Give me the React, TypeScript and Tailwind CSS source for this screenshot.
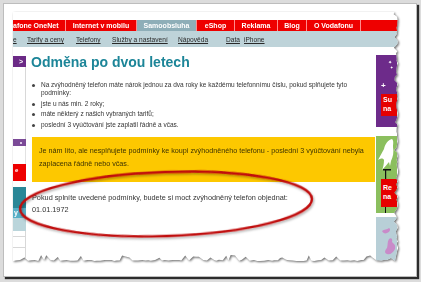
import React from "react";

function rng(seed: number) {
  let s = seed;
  return () => {
    s = (s * 16807) % 2147483647;
    return (s - 1) / 2147483646;
  };
}

function tornClip(W: number, H: number) {
  const r = rng(11);
  const pts: string[] = ["0px 0px"];
  let y = 0;
  while (y < H - 10) {
    const deep = r() < 0.12;
    const x = deep ? W - 4 - r() * 1.5 : W - 1 - r() * 2;
    pts.push(`${x.toFixed(1)}px ${y.toFixed(1)}px`);
    y += 1.5 + r() * 2.5;
  }
  let x = W - 4;
  while (x > 0) {
    const spike = r() < 0.25;
    const yy = spike ? H - 6 - r() * 3 : H - 3 - r() * 1.2;
    pts.push(`${x.toFixed(1)}px ${yy.toFixed(1)}px`);
    x -= 2 + r() * 2.5;
  }
  pts.push(`0px ${H - 3}px`);
  return `polygon(${pts.join(",")})`;
}

const clip = tornClip(386, 252);

export default function App() {
  return (
    <div className="relative w-[421px] h-[282px] overflow-hidden bg-[#dcdcdc] pt-[3px] pl-[3px] font-['Liberation_Sans',Arial,sans-serif]">
      <div className="w-[414px] h-[274px] bg-white border border-[#bdbdbd] shadow-[2px_2px_1px_rgba(0,0,0,0.8)] pt-[8px] pl-[9px]">
        <div className="w-[386px] h-[252px] drop-shadow-[1px_1px_1px_rgba(0,0,0,0.6)]">
          <div className="w-[386px] h-[252px] bg-white overflow-hidden" style={{ clipPath: clip }}>
            <div className="h-[8px]" />
            {/* main nav */}
            <div className="flex h-[11px] bg-[#ee0000] text-white font-bold text-[7px] leading-[11px] whitespace-nowrap">
              <div className="w-[53px] border-r border-[#ff8c8c]">afone OneNet</div>
              <div className="w-[71px] border-r border-[#ff8c8c] text-center">Internet v mobilu</div>
              <div className="w-[60px] border-r border-[#ff8c8c] bg-[#8eaeb8] text-center">Samoobsluha</div>
              <div className="w-[38px] border-r border-[#ff8c8c] text-center">eShop</div>
              <div className="w-[43px] border-r border-[#ff8c8c] text-center">Reklama</div>
              <div className="w-[29px] border-r border-[#ff8c8c] text-center">Blog</div>
              <div className="w-[54px] border-r border-[#ff8c8c] text-center">O Vodafonu</div>
            </div>
            {/* sub nav */}
            <div className="grid grid-cols-[14px_49px_36px_66px_48px_18px_auto] h-[16px] bg-[#bed3d9] pt-[4px] text-[6.6px] leading-[10px] text-[#2a2a2a] underline whitespace-nowrap">
              <span>e</span>
              <span>Tarify a ceny</span>
              <span>Telefony</span>
              <span>Služby a nastavení</span>
              <span>Nápověda</span>
              <span>Data</span>
              <span>iPhone</span>
            </div>
            {/* body row */}
            <div className="flex pt-[8px]">
              {/* left sidebar */}
              <div className="w-[13px] flex flex-col">
                <div className="mt-[1px] h-[11px] bg-[#6b2a86] text-white text-[7px] font-bold leading-[11px] text-right pr-[3px]">&gt;</div>
                <div className="h-[72px] border-r border-[#d8d8d8]" />
                <div className="h-[7px] bg-[#7b4a97] flex items-center justify-end pr-[4px]">
                  <div className="w-[2px] h-[2px] bg-[#d9c6e4]" />
                </div>
                <div className="h-[18px] border-r border-[#e2e2e2]" />
                <div className="h-[17px] bg-[#ee0000] text-white text-[6px] font-bold leading-[12px] pl-[2px]">e</div>
                <div className="h-[6px]" />
                <div className="h-[21px] bg-[#2a8797]" />
                <div className="h-[10px] bg-[#57afc6] text-white text-[7px] font-bold leading-[9px] pl-[1px]">y</div>
                <div className="h-[13px] bg-[#bad5db]" />
                <div className="h-[5px] border-r border-[#d8d8d8]" />
                <div className="h-[11px] border-t border-r border-[#d8d8d8]" />
                <div className="h-[20px] border-t border-r border-[#d8d8d8]" />
              </div>
              {/* main column */}
              <div className="w-[343px] ml-[6px] flex flex-col">
                <h1 className="-ml-[1px] -mt-[1px] text-[14px] leading-[17px] font-bold text-[#1c8598]">Odměna po dvou letech</h1>
                <ul className="mt-[9.5px] flex flex-col gap-[2px] text-[6.5px] leading-[8.5px] text-[#333]">
                  <li className="flex">
                    <span className="shrink-0 mt-[3px] w-[3px] h-[3px] rounded-full bg-[#444]" />
                    <span className="ml-[6px] w-[318px]">Na zvýhodněný telefon máte nárok jednou za dva roky ke každému telefonnímu číslu, pokud splňujete tyto podmínky:</span>
                  </li>
                  <li className="flex">
                    <span className="shrink-0 mt-[3px] w-[3px] h-[3px] rounded-full bg-[#444]" />
                    <span className="ml-[6px]">jste u nás min. 2 roky;</span>
                  </li>
                  <li className="flex">
                    <span className="shrink-0 mt-[3px] w-[3px] h-[3px] rounded-full bg-[#444]" />
                    <span className="ml-[6px]">máte některý z našich vybraných tarifů;</span>
                  </li>
                  <li className="flex">
                    <span className="shrink-0 mt-[3px] w-[3px] h-[3px] rounded-full bg-[#444]" />
                    <span className="ml-[6px]">poslední 3 vyúčtování jste zaplatil řádně a včas.</span>
                  </li>
                </ul>
                <div className="mt-[8px] h-[45px] bg-[#fdc800] pt-[6.5px] pl-[7px] pr-[4px] text-[7.2px] leading-[13px] text-[#3d3300]">
                  Je nám líto, ale nesplňujete podmínky ke koupi zvýhodněného telefonu - poslední 3 vyúčtování nebyla zaplacena řádně nebo včas.
                </div>
                <p className="mt-[10px] text-[7.3px] leading-[12px] text-[#333]">
                  Pokud splníte uvedené podmínky, budete si moct zvýhodněný telefon objednat:
                  <br />
                  01.01.1972
                </p>
              </div>
              {/* right sidebar */}
              <div className="w-[21px] ml-[1px] flex flex-col">
                <div className="h-[72px] bg-[#6d2b8a] flex flex-col">
                  <div className="pl-[12px] pt-[4px] text-white text-[5px] leading-[6px]">✦</div>
                  <div className="pl-[14px] text-white text-[4px] leading-[5px]">✦</div>
                  <div className="pl-[5px] mt-[12px] text-white text-[8px] leading-[8px] font-bold">+</div>
                  <div className="ml-[5px] mt-[4px] h-[22px] bg-[#e60000] text-white text-[7px] font-bold leading-[8.5px] pl-[2px] pt-[2px]">
                    Su<br />na
                  </div>
                </div>
                <div className="h-[9px]" />
                <div className="h-[77px] bg-[#8bbf5e] flex flex-col">
                  <svg width="21" height="43" viewBox="0 0 21 43" className="block">
                    <path d="M16 3 C12 4 9 8 8 13 C6 17 4 20 2 24 C5 22 7 22 8 24 C8 28 7 32 6 34 C9 31 11 28 13 26 L14 30 L15 25 C17 21 18 16 17 11 C17 8 18 5 16 3 Z" fill="#ffffff" />
                    <rect x="7" y="33" width="8" height="1.5" fill="#111" />
                    <rect x="9" y="33" width="1.2" height="10" fill="#111" />
                  </svg>
                  <div className="ml-[5px] h-[28px] bg-[#e60000] text-white text-[7px] font-bold leading-[9px] pl-[2px] pt-[4px]">
                    Re<br />na
                  </div>
                  <div className="ml-[9px] w-[1.2px] flex-1 bg-[#111]" />
                </div>
                <div className="h-[4px]" />
                <div className="flex-1 bg-[#b8cfd7]">
                  <svg width="21" height="44" viewBox="0 0 21 44" className="block">
                    <path d="M6 14 C8 12 11 13 13 11 C15 12 14 15 11 16 C9 17 7 16 6 14 Z" fill="#c98bc9" />
                    <path d="M13 22 C15 20 17 22 16 25 C18 27 20 28 19 32 C17 36 14 38 11 37 C8 36 9 33 11 31 C12 28 11 25 13 22 Z" fill="#c98bc9" />
                  </svg>
                </div>
              </div>
            </div>
          </div>
        </div>
      </div>
      <svg className="absolute left-0 top-0" width="421" height="282" viewBox="0 0 421 282">
        <defs>
          <filter id="sh" x="-10%" y="-30%" width="120%" height="160%">
            <feDropShadow dx="1" dy="1.5" stdDeviation="1" floodColor="#000" floodOpacity="0.35" />
          </filter>
        </defs>
        <ellipse cx="166" cy="204" rx="146" ry="32" transform="rotate(-2 166 204)" fill="none" stroke="#c00a0a" strokeWidth="2.4" filter="url(#sh)" />
      </svg>
    </div>
  );
}
